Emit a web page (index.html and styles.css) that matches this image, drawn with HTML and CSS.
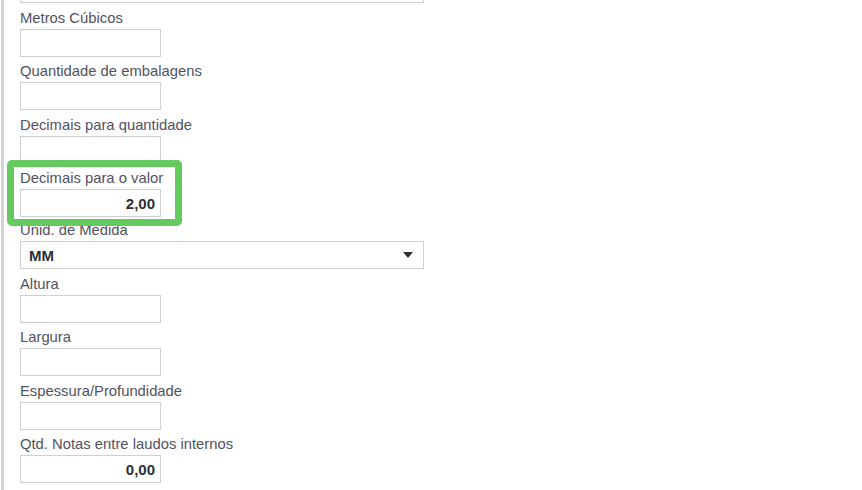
FILE: index.html
```html
<!DOCTYPE html>
<html lang="pt-BR">
<head>
  <meta charset="UTF-8" />
  <title>Cadastro de Produto</title>
  <link rel="stylesheet" href="styles.css">
</head>
<body>
  <div class="pagina">
    <div class="campo-topo"></div>

    <div class="campo">
      <label>Metros Cúbicos</label>
      <input type="text" class="curto" />
    </div>

    <div class="campo">
      <label>Quantidade de embalagens</label>
      <input type="text" class="curto" />
    </div>

    <div class="campo">
      <label>Decimais para quantidade</label>
      <input type="text" class="curto" />
    </div>

    <div class="campo destaque">
      <label>Decimais para o valor</label>
      <input type="text" class="curto numero" value="2,00" />
    </div>

    <div class="campo">
      <label>Unid. de Medida</label>
      <div class="selecao">
        <span>MM</span>
        <svg width="10" height="6" viewBox="0 0 10 6"><path d="M0 0h10L5 6z" fill="#2b2f38"/></svg>
      </div>
    </div>

    <div class="campo">
      <label>Altura</label>
      <input type="text" class="curto" />
    </div>

    <div class="campo">
      <label>Largura</label>
      <input type="text" class="curto" />
    </div>

    <div class="campo">
      <label>Espessura/Profundidade</label>
      <input type="text" class="curto" />
    </div>

    <div class="campo">
      <label>Qtd. Notas entre laudos internos</label>
      <input type="text" class="curto numero" value="0,00" />
    </div>
  </div>
</body>
</html>
```

FILE: styles.css
```css
body {
  margin: 0;
  font-family: "Liberation Sans", Arial, sans-serif;
  background: #fff;
  overflow: hidden;
}

.pagina {
  margin-left: 1px;
  border-left: 3px solid #d3d3d3;
  padding-left: 16px;
  height: 100vh;
  display: flex;
  flex-direction: column;
  gap: 7.5px;
}

.campo-topo {
  width: 402px;
  height: 28px;
  margin-top: -27px;
  border: 1px solid #cfcfcf;
  flex-shrink: 0;
}

.campo {
  display: flex;
  flex-direction: column;
  flex-shrink: 0;
}

.campo label {
  height: 18px;
  line-height: 14px;
  font-size: 14.8px;
  color: #52525f;
  white-space: nowrap;
}

.campo input {
  box-sizing: border-box;
  height: 28px;
  border: 1px solid #cfcfcf;
  padding: 0 5px;
  font-family: inherit;
  font-size: 15px;
  color: #2b2f38;
  outline: none;
}

.curto {
  width: 141px;
}

.numero {
  text-align: right;
  font-weight: bold;
}

.selecao {
  box-sizing: border-box;
  width: 404px;
  height: 28px;
  border: 1px solid #cfcfcf;
  display: flex;
  align-items: center;
  justify-content: space-between;
  padding: 0 10px 0 8px;
  font-size: 15px;
  font-weight: bold;
  color: #2b2f38;
}

.destaque {
  position: relative;
  z-index: 2;
  width: 141px;
  background: #fff;
  border: 7px solid #64c95f;
  border-radius: 5px;
  padding: 4px 14px 2px 6px;
  margin: -11px 0 -10.5px -13px;
}
```
